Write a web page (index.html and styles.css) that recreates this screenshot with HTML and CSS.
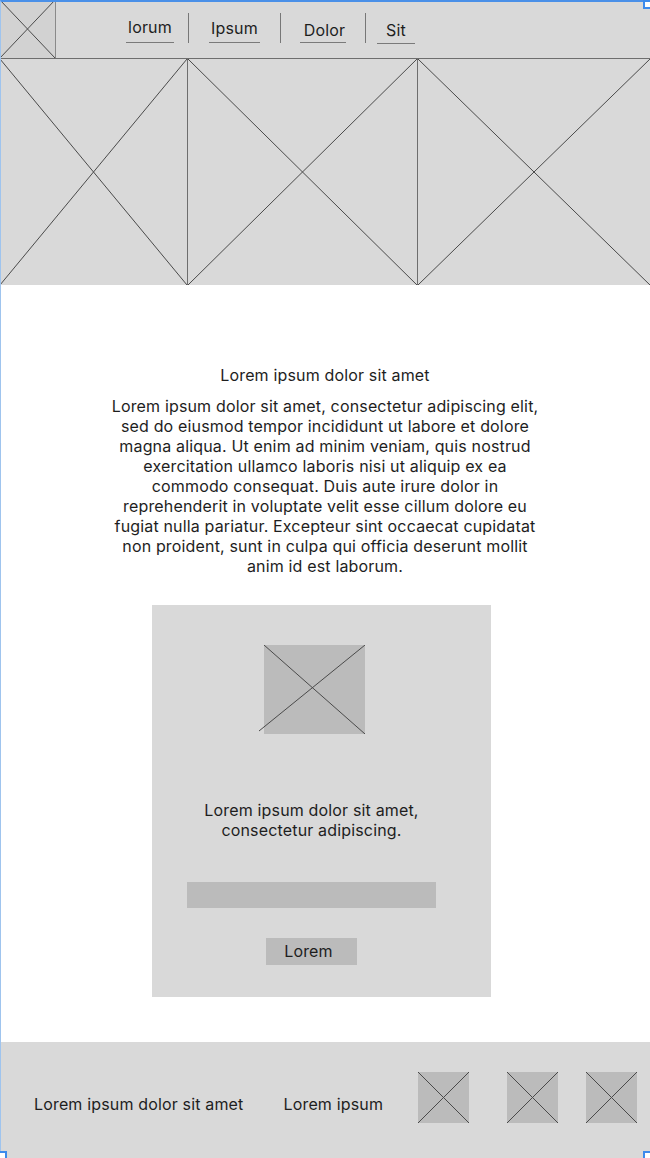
FILE: index.html
```html
<!DOCTYPE html>
<html lang="en">
<head>
<meta charset="utf-8">
<title>Wireframe</title>
<link rel="stylesheet" href="styles.css">
</head>
<body>
<div class="page">
  <header class="header">
    <div class="logo">
      <svg class="x" viewBox="0 0 100 100" preserveAspectRatio="none"><line x1="0" y1="0" x2="100" y2="100"/><line x1="100" y1="0" x2="0" y2="100"/></svg>
    </div>
    <nav class="nav">
      <div class="nav-item n1"><span class="nav-link">lorum</span></div>
      <div class="nav-item n2"><span class="nav-link">Ipsum</span></div>
      <div class="nav-item n3"><span class="nav-link">Dolor</span></div>
      <div class="nav-item n4"><span class="nav-link">Sit</span></div>
    </nav>
  </header>

  <section class="hero">
    <div class="panel p1"><svg class="x" viewBox="0 0 100 100" preserveAspectRatio="none"><line x1="0" y1="0" x2="100" y2="100"/><line x1="100" y1="0" x2="0" y2="100"/></svg></div>
    <div class="panel p2"><svg class="x" viewBox="0 0 100 100" preserveAspectRatio="none"><line x1="0" y1="100" x2="100" y2="0"/><line x1="0" y1="0" x2="100" y2="100"/></svg></div>
    <div class="panel p3"><svg class="x" viewBox="0 0 100 100" preserveAspectRatio="none"><line x1="0" y1="0" x2="100" y2="100"/><line x1="100" y1="0" x2="0" y2="100"/></svg></div>
  </section>

  <main class="main">
    <h1 class="title">Lorem ipsum dolor sit amet</h1>
    <p class="text">Lorem ipsum dolor sit amet, consectetur adipiscing elit, sed do eiusmod tempor incididunt ut labore et dolore magna aliqua. Ut enim ad minim veniam, quis nostrud exercitation ullamco laboris nisi ut aliquip ex ea commodo consequat. Duis aute irure dolor in reprehenderit in voluptate velit esse cillum dolore eu fugiat nulla pariatur. Excepteur sint occaecat cupidatat non proident, sunt in culpa qui officia deserunt mollit anim id est laborum.</p>

    <div class="card">
      <div class="card-img">
        <svg class="x over" viewBox="0 0 106 89" preserveAspectRatio="none"><line x1="5" y1="0" x2="106" y2="89"/><line x1="106" y1="0" x2="0" y2="86"/></svg>
      </div>
      <p class="card-text">Lorem ipsum dolor sit amet,<br>consectetur adipiscing.</p>
      <div class="card-input"></div>
      <div class="card-btn">Lorem</div>
    </div>
  </main>

  <footer class="footer">
    <span class="f-text f1">Lorem ipsum dolor sit amet</span>
    <span class="f-text f2">Lorem ipsum</span>
    <div class="f-icon i1"><svg class="x" viewBox="0 0 100 100" preserveAspectRatio="none"><line x1="0" y1="0" x2="100" y2="100"/><line x1="100" y1="0" x2="0" y2="100"/></svg></div>
    <div class="f-icon i2"><svg class="x" viewBox="0 0 100 100" preserveAspectRatio="none"><line x1="0" y1="0" x2="100" y2="100"/><line x1="100" y1="0" x2="0" y2="100"/></svg></div>
    <div class="f-icon i3"><svg class="x" viewBox="0 0 100 100" preserveAspectRatio="none"><line x1="0" y1="0" x2="100" y2="100"/><line x1="100" y1="0" x2="0" y2="100"/></svg></div>
  </footer>

  <div class="frame">
    <span class="handle h-tr"></span>
    <span class="handle h-bl"></span>
    <span class="handle h-br"></span>
  </div>
</div>
</body>
</html>
```

FILE: styles.css
```css
* { box-sizing: border-box; }

html, body {
  margin: 0;
  padding: 0;
  background: #ffffff;
}

body {
  font-family: Inter, "Noto Sans", "Liberation Sans", sans-serif;
  font-size: 16px;
  line-height: 20px;
  letter-spacing: 0.16px;
  color: #1e1e1e;
}

.page {
  position: relative;
  width: 650px;
  height: 1158px;
  overflow: hidden;
}

.x {
  display: block;
  width: 100%;
  height: 100%;
}

.x line {
  stroke: #4a4a4a;
  stroke-width: 1;
  vector-effect: non-scaling-stroke;
}

/* Header */
.header {
  display: flex;
  height: 59px;
  background: #d9d9d9;
  border-bottom: 1px solid #6e6e6e;
}

.logo {
  width: 56px;
  height: 58px;
  background: #d2d2d2;
  border-right: 1px solid #8a8a8a;
}

.nav {
  display: flex;
  align-items: flex-start;
  padding-left: 56px;
}

.nav-item {
  height: 30px;
  margin-top: 13px;
  display: flex;
  justify-content: center;
}

.n1 { width: 76px; }
.n2 { width: 92px; border-left: 1px solid #777; }
.n3 { width: 85px; border-left: 1px solid #777; }
.n4 { width: 61px; border-left: 1px solid #777; }

.nav-link {
  display: inline-block;
  padding: 4px 2px 5px;
  height: 30px;
  border-bottom: 1px solid #7a7a7a;
}

.n2 .nav-link { padding-top: 5px; }
.n3 .nav-link { padding-top: 7px; padding-left: 4px; padding-right: 1px; }
.n4 .nav-link { padding-top: 7px; padding-left: 9px; padding-right: 9px; height: 31px; }

/* Hero */
.hero {
  display: flex;
  height: 226px;
  background: #d9d9d9;
}

.panel { height: 100%; }
.p1 { width: 188px; border-right: 1px solid #6e6e6e; }
.p2 { width: 230px; border-right: 1px solid #6e6e6e; }
.p3 { flex: 1; }

/* Main */
.main {
  display: flex;
  flex-direction: column;
  align-items: center;
  padding-top: 80px;
}

.title {
  margin: 0;
  font-size: 16px;
  font-weight: 400;
  line-height: 20px;
}

.text {
  margin: 11px 0 0;
  width: 434px;
  text-align: center;
}

.card {
  margin: 29px 0 0 -7px;
  width: 339px;
  height: 392px;
  background: #d9d9d9;
  padding: 40px 20px 0 0;
  display: flex;
  flex-direction: column;
  align-items: center;
}

.card-img {
  width: 101px;
  height: 89px;
  background: #bbbbbb;
  margin-left: 5px;
  position: relative;
}

.card-img .over {
  position: absolute;
  left: -5px;
  top: 0;
  width: 106px;
  height: 89px;
}

.card-text {
  margin: 66px 0 0;
  text-align: center;
}

.card-input {
  margin-top: 42px;
  width: 249px;
  height: 26px;
  background: #bbbbbb;
}

.card-btn {
  margin-top: 30px;
  width: 91px;
  height: 27px;
  background: #bbbbbb;
  text-align: center;
  line-height: 27px;
  padding-right: 6px;
}

/* Footer */
.footer {
  position: absolute;
  left: 0;
  right: 0;
  bottom: 0;
  height: 116px;
  background: #d9d9d9;
  display: flex;
  align-items: center;
  padding-left: 34px;
}

.f-text { margin-top: 8px; white-space: nowrap; }
.f2 { margin-left: 40px; }

.f-icon {
  width: 51px;
  height: 51px;
  background: #bbbbbb;
  margin-bottom: 6px;
  flex: none;
}

.i1 { margin-left: 35px; }
.i2 { margin-left: 38px; }
.i3 { margin-left: 28px; }

/* Selection frame */
.frame {
  position: absolute;
  inset: 0;
  border-top: 2px solid #4a90e8;
  border-left: 1px solid #9fc4ee;
  pointer-events: none;
}

.handle {
  position: absolute;
  width: 9px;
  height: 9px;
  background: #ffffff;
  border: 2px solid #3d8bec;
}

.h-tr { right: -2px; top: -2px; }
.h-bl { left: -3px; bottom: -2px; }
.h-br { right: -2px; bottom: -2px; }
```
